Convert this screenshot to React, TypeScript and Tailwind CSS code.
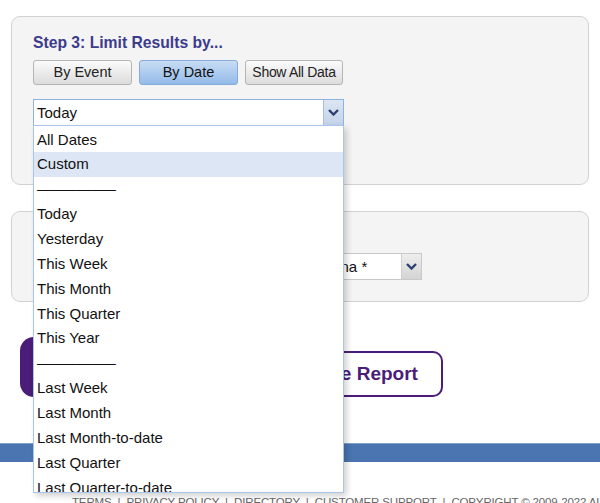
import React from 'react';

const items = [
  'All Dates',
  'Custom',
  '—',
  'Today',
  'Yesterday',
  'This Week',
  'This Month',
  'This Quarter',
  'This Year',
  '—',
  'Last Week',
  'Last Month',
  'Last Month-to-date',
  'Last Quarter',
  'Last Quarter-to-date',
  'Last Year',
];

const Chevron = () => (
  <svg width="11" height="7" viewBox="0 0 11 7">
    <path d="M1 1 L5.5 5.5 L10 1" fill="none" stroke="#2b3f72" strokeWidth="2.4" />
  </svg>
);

const App = () => {
  return (
    <div
      className="relative w-[600px] h-[503px] overflow-hidden bg-white flex flex-col text-[#111]"
      style={{ fontFamily: '"Liberation Sans", Arial, sans-serif' }}
    >
      {/* step 3 panel */}
      <div className="shrink-0 mt-[16px] mx-[11px] h-[169px] rounded-[9px] border border-[#d2d2d2] bg-[#f4f4f4] pl-[21px] pt-[17px]">
        <h2 className="text-[15.7px] font-bold leading-[18px] text-[#3c3b8c]">Step 3: Limit Results by...</h2>
        <div className="mt-[8px] flex gap-[7px]">
          <button className="w-[99px] h-[25px] rounded-[3px] border border-[#b5b5b5] bg-gradient-to-b from-[#fbfbfb] to-[#dcdcdc] text-[14.5px] text-[#222]">
            By Event
          </button>
          <button className="w-[99px] h-[25px] rounded-[3px] border border-[#88acd9] bg-gradient-to-b from-[#c8dcf3] to-[#93bbe9] text-[14.5px] text-[#111]">
            By Date
          </button>
          <button className="w-[98px] h-[25px] rounded-[3px] border border-[#b5b5b5] bg-gradient-to-b from-[#fbfbfb] to-[#dcdcdc] text-[14px] tracking-[-0.3px] text-[#222]">
            Show All Data
          </button>
        </div>
        <div className="mt-[14px] w-[311px] h-[27px] flex border border-[#8fb2de] bg-white">
          <span className="flex-1 pl-[3px] text-[15px] leading-[25px]">Today</span>
          <span className="w-[20px] flex items-center justify-center border-l border-[#a9c0de] bg-gradient-to-b from-[#dde6f2] to-[#c3d3e8]">
            <Chevron />
          </span>
        </div>
      </div>

      {/* options panel */}
      <div className="shrink-0 mt-[26px] mx-[11px] h-[91px] rounded-[9px] border border-[#d2d2d2] bg-[#f4f4f4] flex items-start">
        <div className="ml-[291px] mt-[41px] w-[119px] h-[27px] flex border border-[#c9c9c9] bg-white">
          <span className="flex-1 pl-[4px] text-[15px] leading-[25px] whitespace-nowrap overflow-hidden">Indiana *</span>
          <span className="w-[20px] flex items-center justify-center border-l border-[#cfcfcf] bg-gradient-to-b from-[#eeeeee] to-[#d4d4d4]">
            <Chevron />
          </span>
        </div>
      </div>

      {/* action buttons */}
      <div className="shrink-0 mt-[35px] ml-[20px] flex items-end gap-[14px] h-[60px]">
        <button className="w-[210px] h-[60px] rounded-[14px] bg-[#4b1c78] text-white text-[19px] font-bold">
          View Report
        </button>
        <button className="w-[199px] h-[46px] rounded-[10px] border-2 border-[#4b1c78] bg-white text-[#4b1c78] text-[19px] font-bold">
          Generate Report
        </button>
      </div>

      {/* footer bar */}
      <div className="shrink-0 mt-[46px] h-[19px] bg-[#4a75b0] border-t border-[#7fa0cc]" />
      <div className="shrink-0 mt-[33px] pl-[72px] whitespace-nowrap text-[11.5px] leading-[14px] text-[#666] tracking-[-0.15px]">
        TERMS &nbsp;|&nbsp; PRIVACY POLICY &nbsp;|&nbsp; DIRECTORY &nbsp;|&nbsp; CUSTOMER SUPPORT &nbsp;|&nbsp; COPYRIGHT © 2009-2022 ALL RIGHTS RESERVED
      </div>

      {/* open date dropdown */}
      <div className="absolute left-[33px] top-[125px] w-[311px] h-[368px] overflow-hidden border border-[#a9c6ea] bg-white pt-[1.5px] shadow-[3px_3px_6px_rgba(0,0,0,0.18)]">
        {items.map((it, i) => (
          <div
            key={i}
            className={`h-[24.86px] pl-[3px] text-[15px] leading-[24.86px] whitespace-nowrap ${it === 'Custom' ? 'bg-[#dde6f4]' : ''}`}
          >
            {it === '—' ? <span className="tracking-[-0.5px]">––––––––––</span> : it}
          </div>
        ))}
      </div>
    </div>
  );
};

export default App;
